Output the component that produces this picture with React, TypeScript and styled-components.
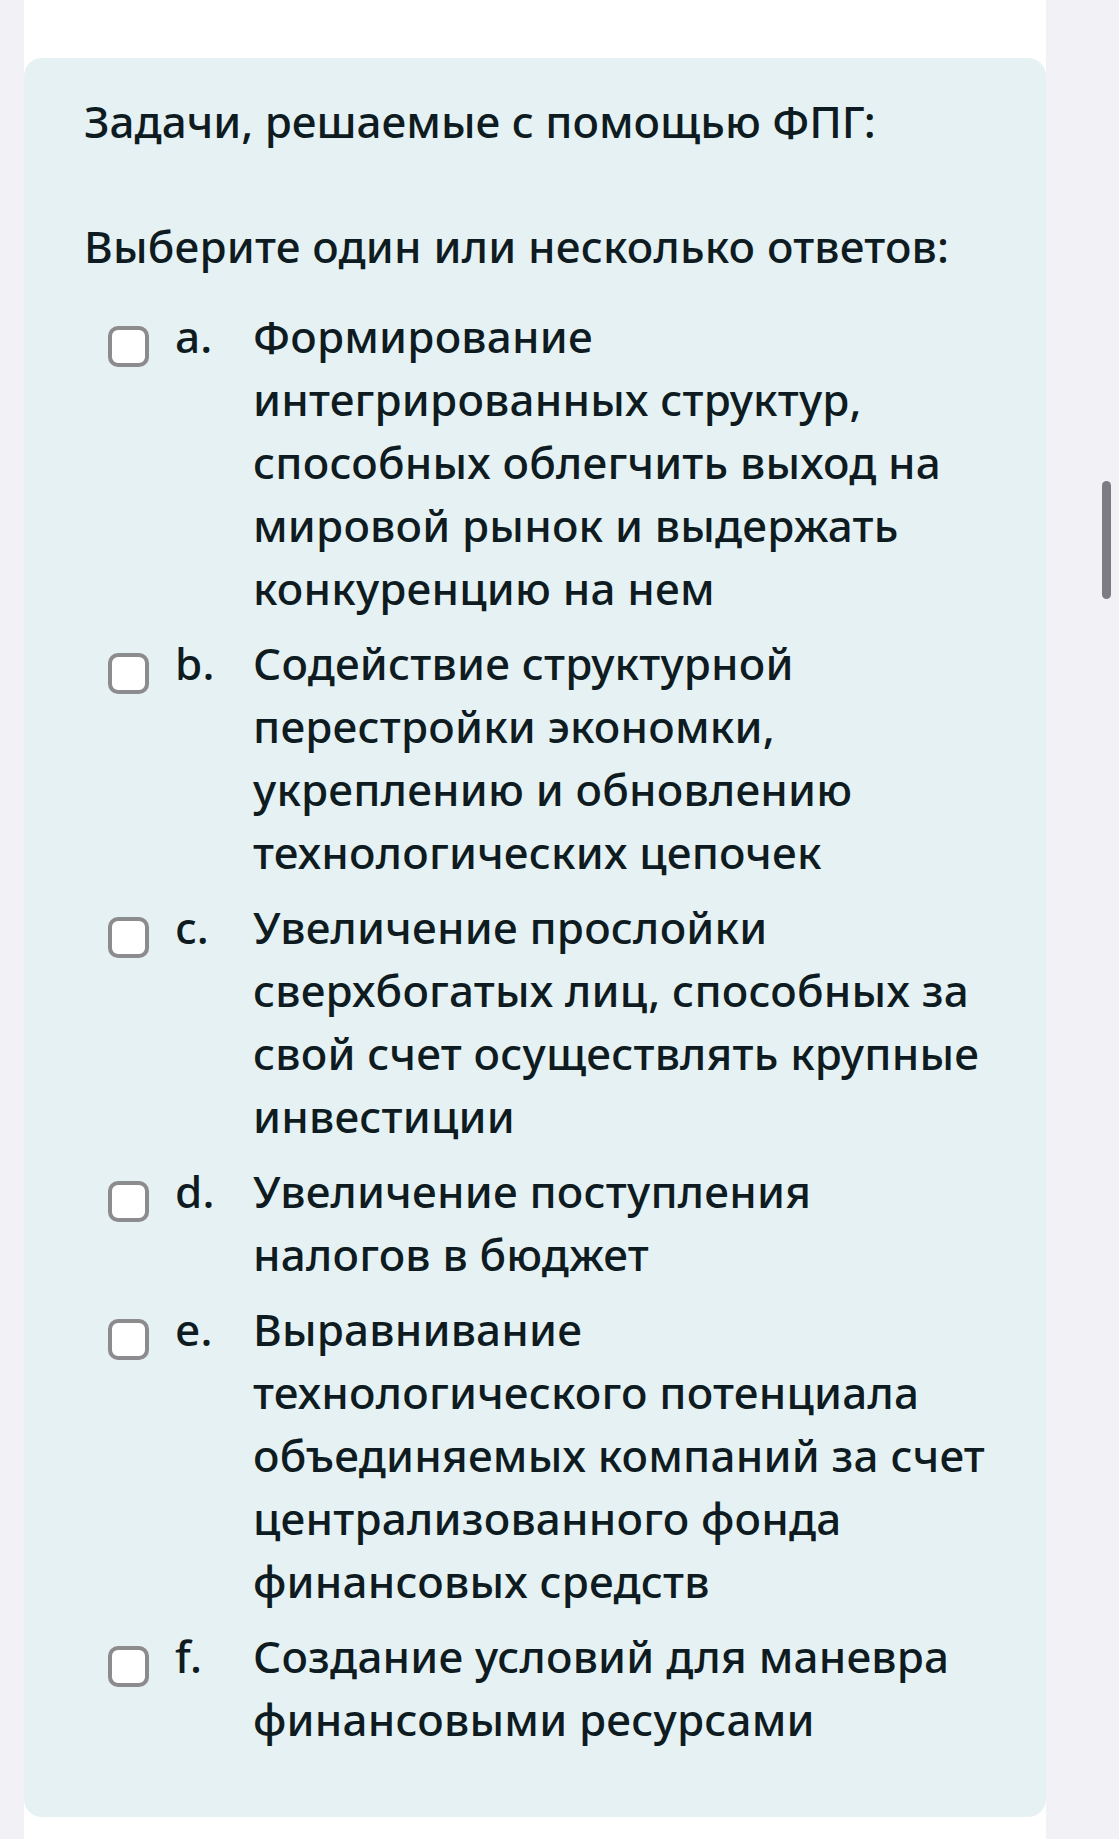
import React from "react";
import styled, { createGlobalStyle } from "styled-components";

const GlobalStyle = createGlobalStyle`
  html, body {
    margin: 0;
    padding: 0;
    background: #f2f2f6;
  }
  body {
    font-family: "Noto Sans", "Open Sans", sans-serif;
    color: #0e1c22;
  }
`;

const Page = styled.div`
  min-height: 1839px;
  padding: 0 73px 0 24px;
  display: flex;
`;

const Column = styled.main`
  flex: 1;
  background: #ffffff;
  padding-top: 58px;
  padding-bottom: 22px;
`;

const Card = styled.section`
  background: #e6f1f4;
  border-radius: 18px;
  padding: 32px 30px 66px 60px;
`;

const Text = styled.p`
  margin: 0;
  font-size: 44px;
  line-height: 63px;
  font-weight: 500;
  letter-spacing: 0.2px;
  white-space: nowrap;
`;

const Question = styled(Text)`
  margin-bottom: 62px;
  letter-spacing: 0;
`;

const Prompt = styled(Text)``;

const Options = styled.div`
  margin-top: 27px;
  display: flex;
  flex-direction: column;
  gap: 12px;
  padding-left: 24px;
`;

const Option = styled.label`
  display: grid;
  grid-template-columns: 41px 52px 1fr;
  column-gap: 26px;
  align-items: start;
`;

const Box = styled.span`
  box-sizing: border-box;
  width: 41px;
  height: 41px;
  margin-top: 21px;
  border: 4px solid #8c8c8e;
  border-radius: 10px;
  background: #ffffff;
`;

const Letter = styled(Text)``;
const Answer = styled(Text)``;

const Scrollbar = styled.div`
  position: fixed;
  left: 1102px;
  top: 481px;
  width: 9px;
  height: 118px;
  border-radius: 5px;
  background: #7d7c82;
`;

const options: { letter: string; lines: string[] }[] = [
  {
    letter: "a.",
    lines: [
      "Формирование",
      "интегрированных структур,",
      "способных облегчить выход на",
      "мировой рынок и выдержать",
      "конкуренцию на нем",
    ],
  },
  {
    letter: "b.",
    lines: [
      "Содействие структурной",
      "перестройки экономки,",
      "укреплению и обновлению",
      "технологических цепочек",
    ],
  },
  {
    letter: "c.",
    lines: [
      "Увеличение прослойки",
      "сверхбогатых лиц, способных за",
      "свой счет осуществлять крупные",
      "инвестиции",
    ],
  },
  {
    letter: "d.",
    lines: ["Увеличение поступления", "налогов в бюджет"],
  },
  {
    letter: "e.",
    lines: [
      "Выравнивание",
      "технологического потенциала",
      "объединяемых компаний за счет",
      "централизованного фонда",
      "финансовых средств",
    ],
  },
  {
    letter: "f.",
    lines: ["Создание условий для маневра", "финансовыми ресурсами"],
  },
];

export default function App() {
  return (
    <>
      <GlobalStyle />
      <Page>
        <Column>
          <Card>
            <Question>Задачи, решаемые с помощью ФПГ:</Question>
            <Prompt>Выберите один или несколько ответов:</Prompt>
            <Options>
              {options.map((o) => (
                <Option key={o.letter}>
                  <Box />
                  <Letter>{o.letter}</Letter>
                  <Answer>
                    {o.lines.map((l, i) => (
                      <React.Fragment key={i}>
                        {i > 0 && <br />}
                        {l}
                      </React.Fragment>
                    ))}
                  </Answer>
                </Option>
              ))}
            </Options>
          </Card>
        </Column>
      </Page>
      <Scrollbar />
    </>
  );
}
